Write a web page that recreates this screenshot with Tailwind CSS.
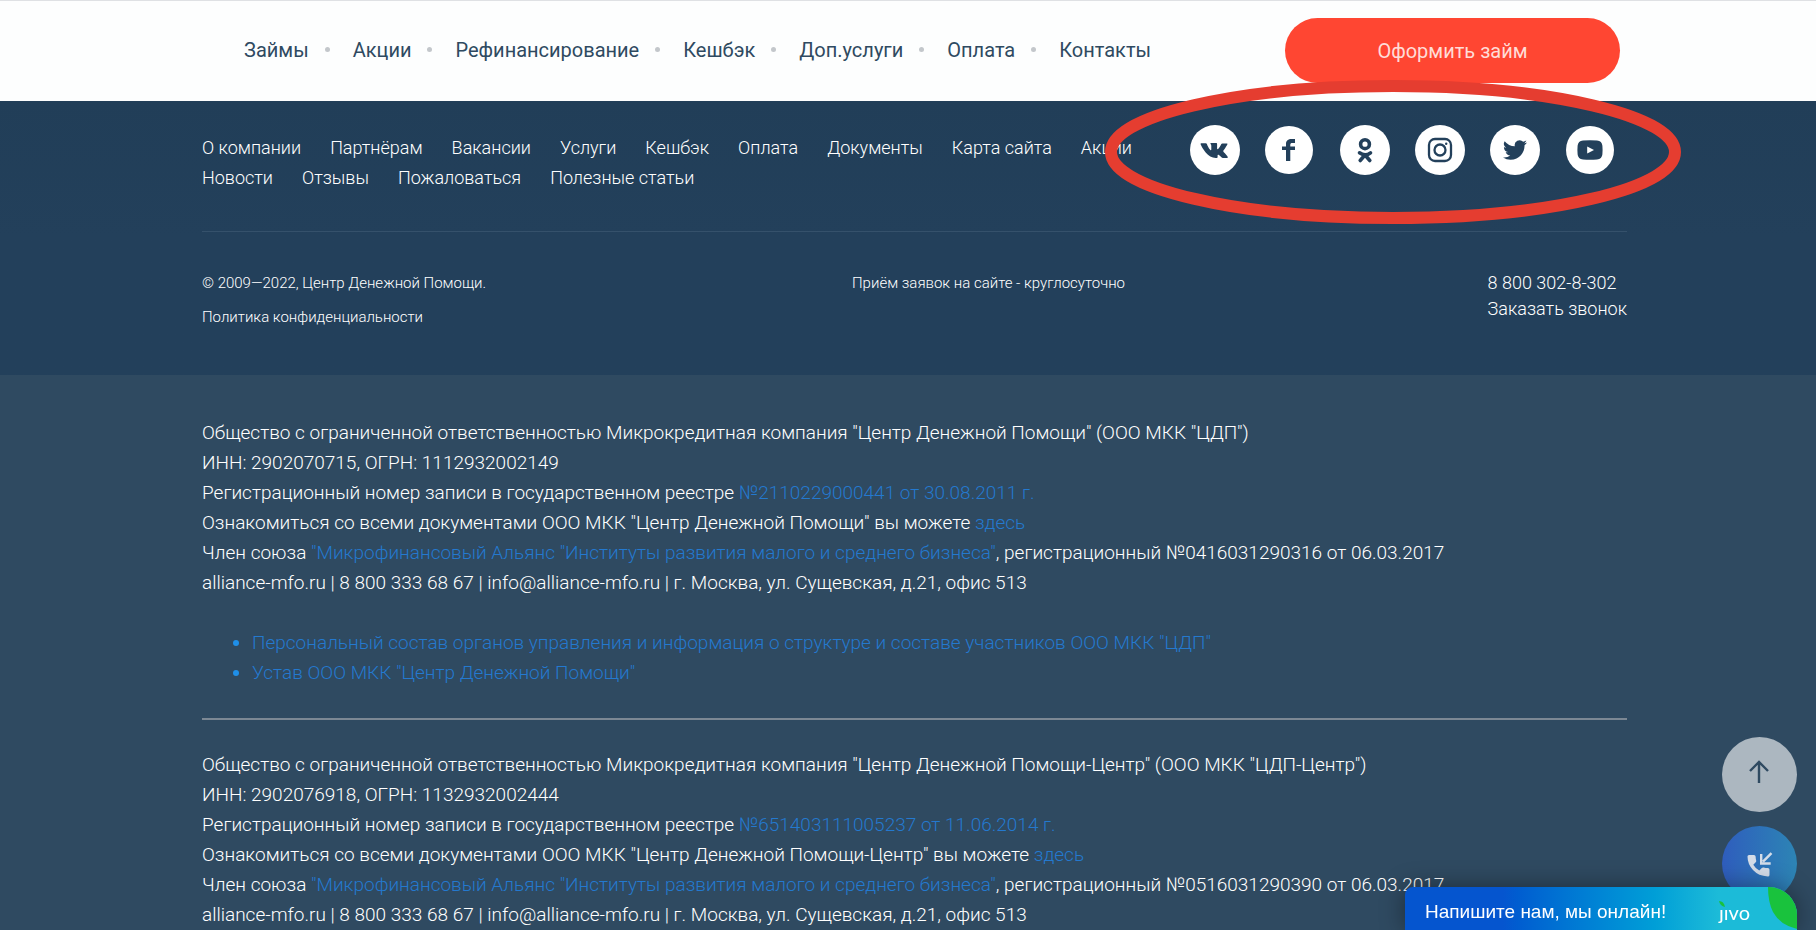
<!DOCTYPE html>
<html lang="ru">
<head>
<meta charset="utf-8">
<meta name="viewport" content="width=device-width, initial-scale=1">
<title>Центр Денежной Помощи</title>
<script src="https://cdn.jsdelivr.net/npm/@tailwindcss/browser@4"></script>
</head>
<body class="relative h-screen overflow-hidden bg-[#2f4a61] font-['Roboto',sans-serif] font-light text-white">

<header class="flex items-center justify-between border-t border-[#dfe1e4] bg-[#fdfefe] pt-[17px] pr-[196px] pb-[18px] pl-[244px] font-normal">
  <nav aria-label="Главное меню" class="pb-[2px]">
    <ul class="flex items-center gap-4 text-[20px] leading-[30px] text-[#2f4a61]">
      <li><a href="#">Займы</a></li><li class="mr-[7px] size-[5px] rounded-full bg-[#c3c7cb]" aria-hidden="true"></li>
      <li><a href="#">Акции</a></li><li class="mr-[7px] size-[5px] rounded-full bg-[#c3c7cb]" aria-hidden="true"></li>
      <li><a href="#">Рефинансирование</a></li><li class="mr-[7px] size-[5px] rounded-full bg-[#c3c7cb]" aria-hidden="true"></li>
      <li><a href="#">Кешбэк</a></li><li class="mr-[7px] size-[5px] rounded-full bg-[#c3c7cb]" aria-hidden="true"></li>
      <li><a href="#">Доп.услуги</a></li><li class="mr-[7px] size-[5px] rounded-full bg-[#c3c7cb]" aria-hidden="true"></li>
      <li><a href="#">Оплата</a></li><li class="mr-[7px] size-[5px] rounded-full bg-[#c3c7cb]" aria-hidden="true"></li>
      <li><a href="#">Контакты</a></li>
    </ul>
  </nav>
  <button type="button" class="h-[65px] w-[335px] rounded-full bg-[#ff4632] text-[20px] font-normal text-[#ffdcd7]">Оформить займ</button>
</header>

<footer>
  <div class="bg-linear-to-b from-[#213e58] via-[#23405b] to-[#23405b] pr-[189px] pl-[202px]">
    <div class="flex items-start justify-between border-b border-[#35516b] pt-[22px] pb-[38px]">
      <nav aria-label="Разделы сайта" class="w-[960px] pt-[10px]">
        <ul class="flex flex-wrap gap-x-[29px] text-[18px] leading-[30px]">
          <li><a href="#">О компании</a></li>
          <li><a href="#">Партнёрам</a></li>
          <li><a href="#">Вакансии</a></li>
          <li><a href="#">Услуги</a></li>
          <li><a href="#">Кешбэк</a></li>
          <li><a href="#">Оплата</a></li>
          <li><a href="#">Документы</a></li>
          <li><a href="#">Карта сайта</a></li>
          <li><a href="#">Акции</a></li>
          <li><a href="#">Новости</a></li>
          <li><a href="#">Отзывы</a></li>
          <li><a href="#">Пожаловаться</a></li>
          <li><a href="#">Полезные статьи</a></li>
        </ul>
      </nav>
      <div class="relative mr-3 flex gap-[25px] pt-[2px] text-[#23405b]">
        <a href="#" aria-label="ВКонтакте" class="size-[50px] rounded-full bg-white"><svg viewBox="0 0 50 50" fill="currentColor"><path d="M11 18.200h4.700c.7 0 1 .3 1.200.9 1.100 3.200 3 6.100 3.900 6.100.3 0 .5-.2.500-1v-3.400c-.1-1.600-1-1.700-1-2.200 0-.3.300-.6.700-.6h5.400c.5 0 .7.300.7.900v4.700c0 .5.200.7.400.7.300 0 .6-.2 1.100-.8 1.600-1.800 2.700-4.400 2.700-4.400.2-.4.500-.7 1.100-.7h4.300c.7 0 .9.400.7.900-.4 1.300-3.900 6.300-3.900 6.300-.3.500-.4.700 0 1.200.3.400 1.300 1.300 2 2.100 1.200 1.300 2.100 2.400 2.300 3.100.2.500-.1.900-.8.900h-4.300c-.8 0-1.100-.5-2.300-1.700-1.300-1.300-1.900-1.500-2.200-1.500-.4 0-.6.100-.6.800v1.400c0 .6-.2 1-1.800 1-4 0-7.400-2.100-9.900-5.200-3.200-3.900-5.300-8.200-5.300-8.800 0-.4.100-.7.400-.7z"/></svg></a>
        <a href="#" aria-label="Facebook" class="flex size-[50px] items-center"><svg viewBox="0 0 48 48" class="size-12 rounded-full bg-white" fill="currentColor"><path d="M21 35V24h-4v-3.500h4v-2.500c0-3.400 2.200-5 5.500-5h3.500v4h-2.600c-1.500 0-2.100.6-2.100 1.800v1.700h4.700V24h-4.700v11z"/></svg></a>
        <a href="#" aria-label="Одноклассники" class="size-[50px] rounded-full bg-white"><svg viewBox="0 0 50 50" fill="none" stroke="currentColor" stroke-width="3.600" stroke-linecap="round"><circle cx="25" cy="19.200" r="4.400"/><path d="M19.500 27.800c3.600 2.600 7.700 2.600 11 0M25 30l-4.800 5.500M25 30l4.800 5.500"/></svg></a>
        <a href="#" aria-label="Instagram" class="size-[50px] rounded-full bg-white"><svg viewBox="0 0 50 50" fill="none" stroke="currentColor" stroke-width="2.300"><rect x="14" y="14" width="22" height="22" rx="6"/><circle cx="25" cy="25" r="5.500"/><circle cx="31.200" cy="18.800" r="1.200" fill="currentColor" stroke="none"/></svg></a>
        <a href="#" aria-label="Twitter" class="size-[50px] rounded-full bg-white"><svg viewBox="0 0 50 50" fill="currentColor"><path transform="translate(13 13)" d="M24 4.560a9.800 9.800 0 0 1-2.830.77 4.900 4.900 0 0 0 2.170-2.720 9.900 9.900 0 0 1-3.130 1.190 4.920 4.920 0 0 0-8.380 4.480A13.940 13.940 0 0 1 1.670 3.150a4.920 4.920 0 0 0 1.520 6.570 4.900 4.900 0 0 1-2.230-.62v.06a4.920 4.920 0 0 0 3.950 4.830 5 5 0 0 1-2.220.08 4.930 4.930 0 0 0 4.600 3.420A9.870 9.870 0 0 1 0 19.540a13.940 13.940 0 0 0 7.550 2.210c9.050 0 14-7.500 14-13.980 0-.21 0-.42-.02-.63A10 10 0 0 0 24 4.560z"/></svg></a>
        <a href="#" aria-label="YouTube" class="grid size-[50px] place-items-center"><svg viewBox="0 0 48 48" class="size-12 rounded-full bg-white"><path fill="currentColor" d="M17 14.500q7-.6 14 0 5 .4 5.400 5.300.4 4.200 0 8.400-.4 4.900-5.400 5.300-7 .6-14 0-5-.4-5.400-5.300-.4-4.200 0-8.400.4-4.900 5.400-5.300z"/><path fill="#fff" d="M21.200 20.600v6.800l6.800-3.400z"/></svg></a>
        <!-- highlight around the social links -->
        <svg class="pointer-events-none absolute -top-[43px] -left-[85px] h-[144px] w-[576px] max-w-none" viewBox="0 0 576 144" fill="none" stroke="#e53d30" stroke-width="12" aria-hidden="true"><ellipse cx="288" cy="72" rx="282" ry="66"/></svg>
      </div>
    </div>
    <div class="flex items-start justify-between pt-[38px] pb-[37px] text-[15px] leading-[26px]">
      <div class="flex w-[650px] flex-col gap-2">
        <p>© 2009—2022, Центр Денежной Помощи.</p>
        <a href="#">Политика конфиденциальности</a>
      </div>
      <p class="flex-1">Приём заявок на сайте - круглосуточно</p>
      <div class="flex flex-col pb-[16px] text-[18px]">
        <a href="tel:88003028302">8 800 302-8-302</a>
        <a href="#">Заказать звонок</a>
      </div>
    </div>
  </div>

  <div class="pt-[43px] pr-[189px] pl-[202px] text-[19px] leading-[30px]">
    <section>
      <p>Общество с ограниченной ответственностью Микрокредитная компания "Центр Денежной Помощи" (ООО МКК "ЦДП")</p>
      <p>ИНН: 2902070715, ОГРН: 1112932002149</p>
      <p>Регистрационный номер записи в государственном реестре <a href="#" class="text-[#2479cf]">№2110229000441 от 30.08.2011 г.</a></p>
      <p>Ознакомиться со всеми документами ООО МКК "Центр Денежной Помощи" вы можете <a href="#" class="text-[#2479cf]">здесь</a></p>
      <p>Член союза <a href="#" class="text-[#2479cf]">"Микрофинансовый Альянс "Институты развития малого и среднего бизнеса"</a>, регистрационный №0416031290316 от 06.03.2017</p>
      <p>alliance-mfo.ru | 8 800 333 68 67 | info@alliance-mfo.ru | г. Москва, ул. Сущевская, д.21, офис 513</p>
      <ul class="mt-[30px] list-disc pl-[50px] text-[#2479cf] marker:text-[#1f8fe8]">
        <li><a href="#">Персональный состав органов управления и информация о структуре и составе участников ООО МКК "ЦДП"</a></li>
        <li><a href="#">Устав ООО МКК "Центр Денежной Помощи"</a></li>
      </ul>
    </section>
    <hr class="mt-[30px] mb-[30px] border-t-2 border-[#7c8894]">
    <section>
      <p>Общество с ограниченной ответственностью Микрокредитная компания "Центр Денежной Помощи-Центр" (ООО МКК "ЦДП-Центр")</p>
      <p>ИНН: 2902076918, ОГРН: 1132932002444</p>
      <p>Регистрационный номер записи в государственном реестре <a href="#" class="text-[#2479cf]">№651403111005237 от 11.06.2014 г.</a></p>
      <p>Ознакомиться со всеми документами ООО МКК "Центр Денежной Помощи-Центр" вы можете <a href="#" class="text-[#2479cf]">здесь</a></p>
      <p>Член союза <a href="#" class="text-[#2479cf]">"Микрофинансовый Альянс "Институты развития малого и среднего бизнеса"</a>, регистрационный №0516031290390 от 06.03.2017</p>
      <p>alliance-mfo.ru | 8 800 333 68 67 | info@alliance-mfo.ru | г. Москва, ул. Сущевская, д.21, офис 513</p>
    </section>
  </div>
</footer>

<!-- floating buttons and chat bar -->
<div class="fixed right-[19px] bottom-[29px] flex flex-col gap-[14px]">
  <button type="button" aria-label="Наверх" class="size-[75px] rounded-full bg-[#acb7c0] text-[#2f4a61]"><svg viewBox="0 0 75 75" fill="none" stroke="currentColor" stroke-width="2.400"><path d="M37 46V25M28 34l9-9 9 9"/></svg></button>
  <button type="button" aria-label="Обратный звонок" class="size-[75px] rounded-full bg-linear-to-r from-[#2f5dbd] to-[#2d84b4] text-[#d3dce8]"><svg viewBox="0 0 75 75" fill="currentColor"><path d="M27 29h5q1.500 0 1.600 1.500.1 2 .6 4 .3 1-.5 1.800l-2.400 2.400q2 3.600 6 5.700l2.500-2.500q.8-.7 1.800-.4 2 .5 4.200.6 1.700.1 1.700 1.600v5.200q0 1.500-1.700 1.500-9.300-.2-14.800-6.300-5.500-6-5.500-13.500Q25.500 29 27 29z"/><path d="M49.500 27.200 41 35.700m-1.800-7.700v9.500h9.500" fill="none" stroke="currentColor" stroke-width="2.400"/></svg></button>
</div>
<button type="button" class="fixed right-[19px] bottom-0 flex h-[43px] w-[392px] items-center justify-between overflow-hidden rounded-tl-lg rounded-tr-[28px] bg-linear-to-r from-[#0555cf] from-25% to-[#1cbbd8] to-80% pt-[6px] pr-[47px] pl-5 font-['Liberation_Sans',sans-serif] text-[19px] leading-[30px] font-normal text-white shadow-[0_0_24px_rgba(0,0,0,0.4)]">
  <span>Напишите нам, мы онлайн!</span>
  <span class="relative font-['Lato',sans-serif] text-[20px] font-normal" aria-label="jivo">ȷıvo<svg class="absolute top-[4px] left-0 size-[6px]" viewBox="0 0 6 6" fill="#19c23d" aria-hidden="true"><path d="M0 0Q5 0 6 6 1 5 0 0z"/></svg></span>
  <svg class="absolute top-0 right-0 h-[43px] w-[29px]" viewBox="0 0 29 43" fill="#19c23d" aria-hidden="true"><path d="M0 0H29V42Q12 38 5 25 0 15 0 0z"/></svg>
</button>
</body>
</html>
